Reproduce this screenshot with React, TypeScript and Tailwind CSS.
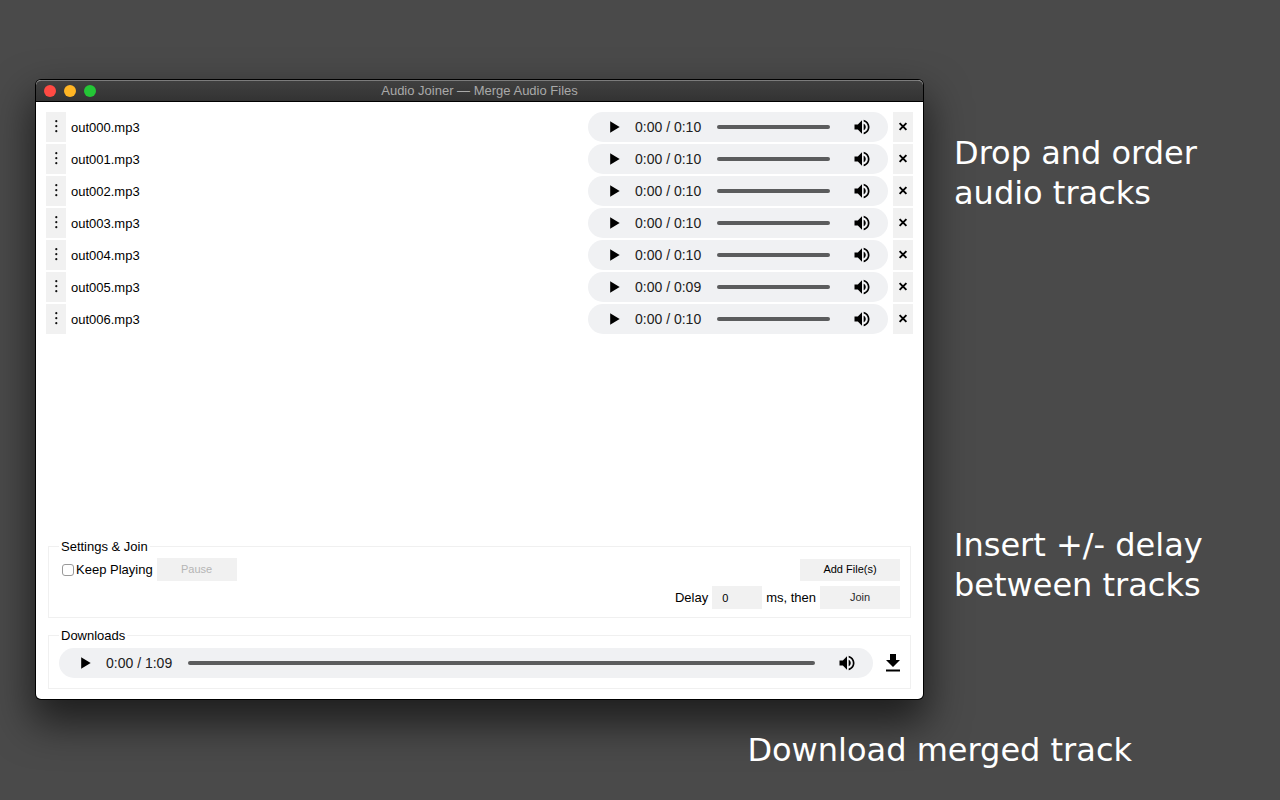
import { useState } from "react";

type Track = { name: string; duration: string };

const initialTracks: Track[] = [
  { name: "out000.mp3", duration: "0:10" },
  { name: "out001.mp3", duration: "0:10" },
  { name: "out002.mp3", duration: "0:10" },
  { name: "out003.mp3", duration: "0:10" },
  { name: "out004.mp3", duration: "0:10" },
  { name: "out005.mp3", duration: "0:09" },
  { name: "out006.mp3", duration: "0:10" },
];

function Player({ label, duration }: { label: string; duration: string }) {
  return (
    <div className="flex h-[30px] w-full items-center rounded-full bg-[#f0f1f3] px-4">
      <button type="button" aria-label={`Play ${label}`} className="shrink-0">
        <svg viewBox="0 0 24 24" className="size-5" fill="#000">
          <path d="M7.4 5v14l11.4-7z" />
        </svg>
      </button>
      <span className="ml-[11px] shrink-0 text-[14px] leading-5 text-[#202020]">0:00 / {duration}</span>
      <input
        type="range"
        aria-label={`Position in ${label}`}
        defaultValue={0}
        className="mr-[22px] ml-4 h-1 min-w-0 flex-1 appearance-none rounded-full bg-[#5b5c5d] [&::-webkit-slider-thumb]:size-0 [&::-webkit-slider-thumb]:appearance-none"
      />
      <button type="button" aria-label={`Mute ${label}`} className="shrink-0">
        <svg viewBox="0 0 24 24" className="size-5" fill="#000">
          <path d="M3 9v6h4l5 5V4L7 9H3zm13.5 3c0-1.77-1.02-3.29-2.5-4.03v8.05c1.48-.73 2.5-2.25 2.5-4.02zM14 3.23v2.06c2.89.86 5 3.54 5 6.71s-2.11 5.85-5 6.71v2.06c4.01-.91 7-4.49 7-8.77s-2.99-7.86-7-8.77z" />
        </svg>
      </button>
    </div>
  );
}

function TrackRow({ track, onRemove }: { track: Track; onRemove: () => void }) {
  return (
    <li className="flex items-center gap-[5px]">
      <button
        type="button"
        aria-label={`Move ${track.name}`}
        className="flex h-[30px] w-5 shrink-0 items-center justify-center bg-[#f1f1f1]"
      >
        <svg viewBox="0 0 20 30" className="h-[30px] w-5" fill="#111">
          <circle cx="10.3" cy="9.2" r="1.1" />
          <circle cx="10.3" cy="14.2" r="1.1" />
          <circle cx="10.3" cy="19.2" r="1.1" />
        </svg>
      </button>
      <span className="min-w-0 flex-1 truncate">{track.name}</span>
      <div className="w-[300px] shrink-0">
        <Player label={track.name} duration={track.duration} />
      </div>
      <button
        type="button"
        aria-label={`Remove ${track.name}`}
        onClick={onRemove}
        className="flex h-[30px] w-5 shrink-0 items-center justify-center bg-[#f1f1f1]"
      >
        <svg viewBox="0 0 20 30" className="h-[30px] w-5" fill="none" stroke="#000" strokeWidth="1.9">
          <path d="M6.6 11.1l6.8 6.8M13.4 11.1l-6.8 6.8" />
        </svg>
      </button>
    </li>
  );
}

function TitleBar() {
  return (
    <header className="flex h-[22px] items-center rounded-t-[5px] border-t border-b border-t-[#7c7c7c] border-b-black bg-linear-to-b from-[#404040] to-[#333333] px-2">
      <div className="flex flex-1 gap-2">
        <button type="button" aria-label="Close" className="size-3 rounded-full bg-[#ff4a43]" />
        <button type="button" aria-label="Minimize" className="size-3 rounded-full bg-[#ffb524]" />
        <button type="button" aria-label="Zoom" className="size-3 rounded-full bg-[#24c636]" />
      </div>
      <h1 className="text-[13px] leading-4 text-[#a9a9a9]">Audio Joiner — Merge Audio Files</h1>
      <div className="flex-1" />
    </header>
  );
}

export default function App() {
  const [tracks, setTracks] = useState(initialTracks);
  const [keepPlaying, setKeepPlaying] = useState(false);
  const [delay, setDelay] = useState("0");

  return (
    <div className="min-h-screen bg-[#4a4a4a] pt-20 pl-9 font-['Liberation_Sans',Arial,sans-serif] text-[13px] leading-[15px] text-black">
      <div className="flex gap-[31px]">
        <main className="flex min-w-0 flex-1 flex-col rounded-[5px] bg-white shadow-[0_0_0_1px_#000,0_20px_40px_4px_rgba(0,0,0,0.6)]">
          <TitleBar />
          <div className="flex min-h-[597px] flex-col justify-between gap-6 p-[10px]">
            <ul className="flex flex-col gap-[2px]">
              {tracks.map((track) => (
                <TrackRow
                  key={track.name}
                  track={track}
                  onRemove={() => setTracks(tracks.filter((t) => t !== track))}
                />
              ))}
            </ul>

            <form className="flex flex-col gap-[10px] px-[2px]" onSubmit={(e) => e.preventDefault()}>
              <fieldset className="border border-[#f0f0f0] px-[10px] pt-1 pb-2">
                <legend className="px-[2px]">Settings &amp; Join</legend>
                <div className="flex items-center">
                  <input
                    id="keep-playing"
                    type="checkbox"
                    checked={keepPlaying}
                    onChange={(e) => setKeepPlaying(e.target.checked)}
                    className="mr-[2px] ml-[3px] size-3 appearance-none rounded-[3px] border border-[#9a9a9a] bg-white checked:bg-[#0b75ff]"
                  />
                  <label htmlFor="keep-playing">Keep Playing</label>
                  <button
                    type="button"
                    disabled
                    className="ml-1 h-[23px] w-20 bg-[#f1f1f1] text-[11px] text-[#b5b5b5]"
                  >
                    Pause
                  </button>
                  <button type="button" className="ml-auto h-[22px] w-[100px] bg-[#f1f1f1] text-[11px]">
                    Add File(s)
                  </button>
                </div>
                <div className="mt-[5px] flex items-center justify-end gap-1">
                  <label htmlFor="delay">Delay</label>
                  <input
                    id="delay"
                    type="text"
                    inputMode="numeric"
                    value={delay}
                    onChange={(e) => setDelay(e.target.value)}
                    className="h-[23px] w-[50px] bg-[#f1f1f1] px-[10px] text-[11px]"
                  />
                  <span>ms, then</span>
                  <button
                    type="submit"
                    className="h-[23px] w-20 bg-[#f1f1f1] text-[11px] text-[#2b2b2b]"
                  >
                    Join
                  </button>
                </div>
              </fieldset>

              <fieldset className="border border-[#f0f0f0] px-[10px] pt-[5px] pb-[10px]">
                <legend className="px-[2px]">Downloads</legend>
                <div className="flex items-center gap-2">
                  <Player label="merged track" duration="1:09" />
                  <a href="#download" aria-label="Download" className="-mr-[5px] shrink-0">
                    <svg viewBox="0 0 24 24" className="size-6" fill="#000">
                      <path d="M19 9h-4V3H9v6H5l7 7 7-7zM5 18.4v2.2h14v-2.2H5z" />
                    </svg>
                  </a>
                </div>
              </fieldset>
            </form>
          </div>
        </main>

        <aside className="flex w-[326px] shrink-0 flex-col justify-between pt-[53px] pb-[94px] font-['DejaVu_Sans',Verdana,sans-serif] text-[32px] leading-10 text-white">
          <p>
            Drop and order
            <br />
            audio tracks
          </p>
          <p>
            Insert +/- delay
            <br />
            between tracks
          </p>
        </aside>
      </div>
      <p className="mt-[31px] pr-[148px] text-right font-['DejaVu_Sans',Verdana,sans-serif] text-[32px] leading-10 text-white">
        Download merged track
      </p>
    </div>
  );
}
